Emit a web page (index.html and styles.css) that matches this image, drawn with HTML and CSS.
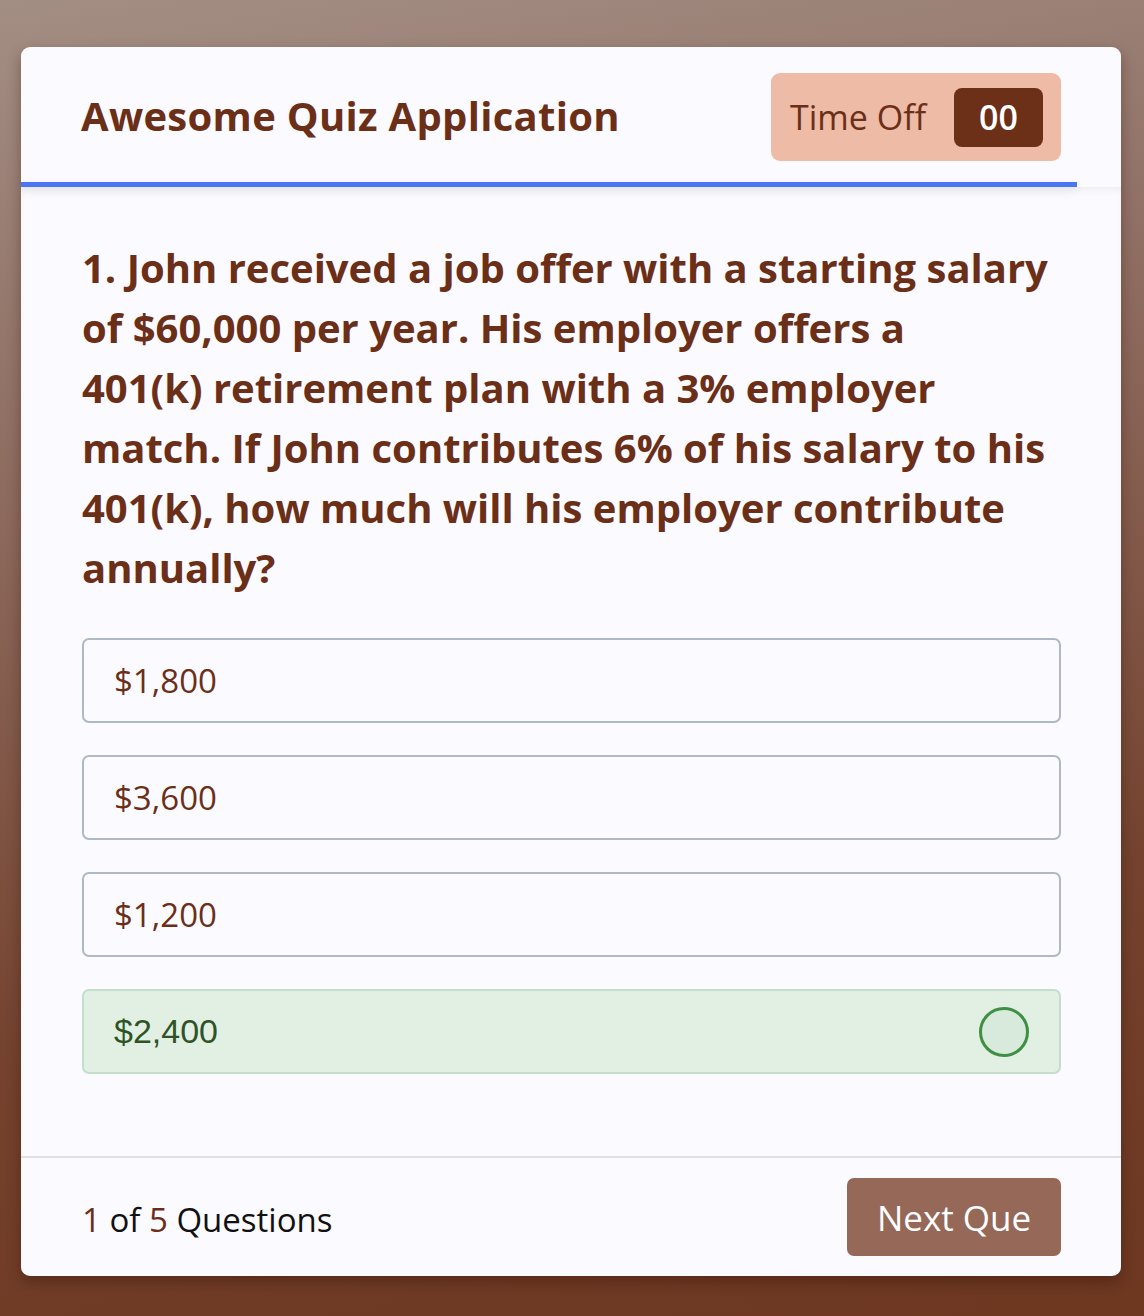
FILE: index.html
```html
<!DOCTYPE html>
<html lang="en">
<head>
<meta charset="utf-8">
<title>Awesome Quiz Application</title>
<link rel="stylesheet" href="styles.css">
</head>
<body>
<div class="quiz-box">
  <header class="quiz-header">
    <div class="title">Awesome Quiz Application</div>
    <div class="timer">
      <span class="time-text">Time Off</span>
      <span class="time-sec">00</span>
    </div>
  </header>
  <div class="time-line"></div>
  <section class="quiz-body">
    <div class="que-text">1. John received a job offer with a starting salary of $60,000 per year. His employer offers a<br>401(k) retirement plan with a 3% employer match. If John contributes 6% of his salary to his 401(k), how much will his employer contribute annually?</div>
    <div class="option-list">
      <div class="option">$1,800</div>
      <div class="option">$3,600</div>
      <div class="option">$1,200</div>
      <div class="option correct"><span>$2,400</span><span class="icon"></span></div>
    </div>
  </section>
  <footer class="quiz-footer">
    <div class="total-que"><b>1</b> of <b>5</b> Questions</div>
    <button class="next-btn">Next Que</button>
  </footer>
</div>
</body>
</html>
```

FILE: styles.css
```css
* { box-sizing: border-box; }
html, body { margin: 0; padding: 0; }
body {
  width: 1144px;
  height: 1316px;
  overflow: hidden;
  background: linear-gradient(170deg, #a38e84 0%, #8f6e62 30%, #74422e 70%, #6d3720 100%);
  font-family: "Open Sans", "Liberation Sans", sans-serif;
  padding-top: 47px;
  padding-left: 21px;
}
.quiz-box {
  width: 1100px;
  height: 1229px;
  background: #fafaff;
  border-radius: 9px;
  box-shadow: 0 6px 14px rgba(40, 15, 5, 0.35);
  display: flex;
  flex-direction: column;
  overflow: hidden;
}
.quiz-header {
  height: 135px;
  padding: 0 60px;
  display: flex;
  align-items: center;
  justify-content: space-between;
}
.title {
  color: #6b2f18;
  font-size: 40px;
  font-weight: 700;
  letter-spacing: 0.3px;
  padding-top: 2px;
}
.timer {
  width: 290px;
  height: 88px;
  margin-top: 5px;
  background: #edbba6;
  border-radius: 9px;
  display: flex;
  align-items: center;
  justify-content: space-between;
  padding: 0 18px 0 19px;
}
.time-text {
  color: #6b2f18;
  font-size: 34px;
  font-weight: 400;
}
.time-sec {
  width: 89px;
  height: 59px;
  background: #6c2f18;
  color: #fff;
  border-radius: 8px;
  font-size: 34px;
  font-weight: 600;
  display: flex;
  align-items: center;
  justify-content: center;
}
.time-line {
  width: 1056px;
  height: 5px;
  background: #4a75f5;
  box-shadow: 0 4px 10px rgba(0, 0, 0, 0.08);
}
.quiz-body {
  flex: 1;
  padding: 51px 60px 0 61px;
  box-shadow: inset 0 5px 10px -4px rgba(0, 0, 0, 0.08);
}
.que-text {
  color: #6b2f18;
  font-size: 40px;
  font-weight: 700;
  line-height: 60px;
}
.option-list {
  margin-top: 40px;
  display: flex;
  flex-direction: column;
  gap: 32px;
}
.option {
  height: 85px;
  flex-shrink: 0;
  border: 2px solid #aeb9c8;
  border-radius: 7px;
  padding: 0 30px;
  display: flex;
  align-items: center;
  justify-content: space-between;
  color: #6b2f18;
  font-size: 33px;
}
.option.correct {
  background: #e2f0e3;
  border-color: #c3dfcb;
  color: #2e5326;
  font-family: "Liberation Sans", Arial, sans-serif;
  font-size: 34px;
}
.icon {
  width: 50px;
  height: 50px;
  border: 3.5px solid #3f8f45;
  border-radius: 50%;
  background: #d7eadb;
}
.quiz-footer {
  height: 120px;
  border-top: 2px solid #dfdfe4;
  padding: 0 61px;
  display: flex;
  align-items: center;
  justify-content: space-between;
}
.total-que {
  font-size: 33px;
  color: #111;
  padding-top: 4px;
}
.total-que b {
  color: #6b2f18;
  font-weight: 500;
}
.next-btn {
  width: 214px;
  height: 78px;
  border: none;
  border-radius: 7px;
  background: #966858;
  color: #fff;
  font-family: "Open Sans", "Liberation Sans", sans-serif;
  font-size: 35px;
  margin-right: -1px;
}
```
